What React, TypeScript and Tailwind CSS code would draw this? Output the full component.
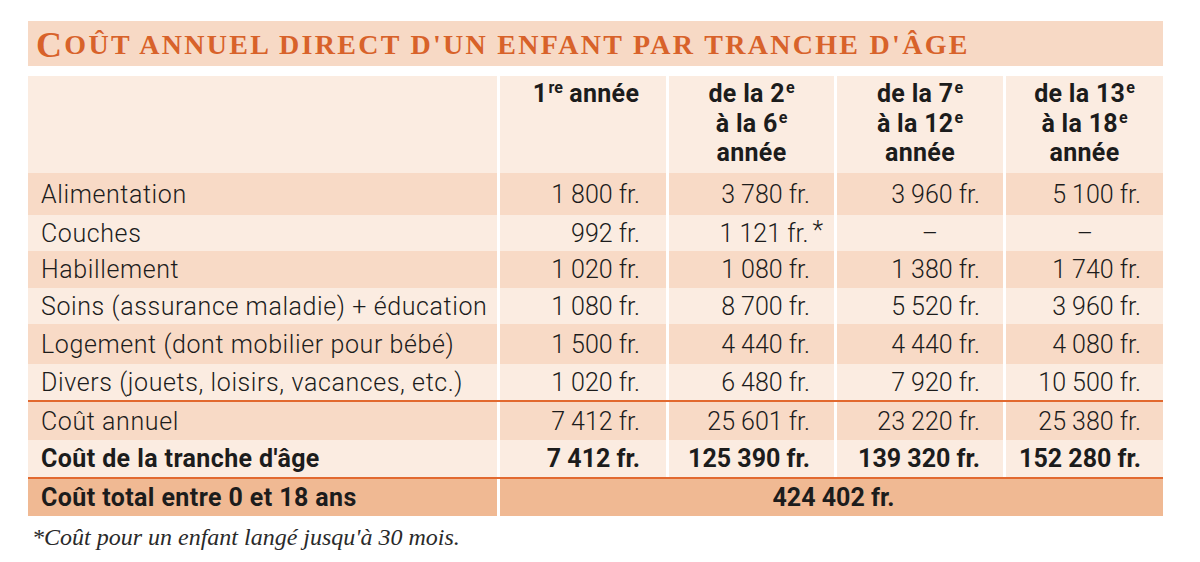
const cols = 'grid grid-cols-[469px_166px_165px_166px_157px] gap-x-[3px]';

type Row = {
  label: string;
  values: React.ReactNode[];
  dark: boolean;
  h: string;
};

const rows: Row[] = [
  { label: 'Alimentation', values: ['1 800 fr.', '3 780 fr.', '3 960 fr.', '5 100 fr.'], dark: true, h: 'h-[42px]' },
  {
    label: 'Couches',
    values: [
      '992 fr.',
      <>1 121 fr.<span className="-mr-[13px] ml-[4px] relative -top-[3px]">*</span></>,
      <span className="pr-[42px]">–</span>,
      <span className="pr-[48px]">–</span>,
    ],
    dark: false,
    h: 'h-[36px]',
  },
  { label: 'Habillement', values: ['1 020 fr.', '1 080 fr.', '1 380 fr.', '1 740 fr.'], dark: true, h: 'h-[37px]' },
  { label: 'Soins (assurance maladie) + éducation', values: ['1 080 fr.', '8 700 fr.', '5 520 fr.', '3 960 fr.'], dark: false, h: 'h-[36px]' },
  { label: 'Logement (dont mobilier pour bébé)', values: ['1 500 fr.', '4 440 fr.', '4 440 fr.', '4 080 fr.'], dark: true, h: 'h-[40px]' },
  { label: 'Divers (jouets, loisirs, vacances, etc.)', values: ['1 020 fr.', '6 480 fr.', '7 920 fr.', '10 500 fr.'], dark: false, h: 'h-[36px]' },
];

// right padding per value column
const pads = ['pr-[26px]', 'pr-[24px]', 'pr-[23px]', 'pr-[22px]'];

function Sup({ children }: { children: React.ReactNode }) {
  return <sup className="text-[16px] relative -top-[9px] ml-[1px] tracking-normal">{children}</sup>;
}

function DataRow({ row, bold = false }: { row: Row; bold?: boolean }) {
  const bg = row.dark ? 'bg-[#f8dac6]' : 'bg-[#fbece1]';
  return (
    <div className={`${cols} ${row.h}`}>
      <div className={`${bg} flex items-center pl-[13px] whitespace-nowrap ${bold ? 'font-bold tracking-[0.4px]' : 'font-light tracking-[0.6px]'}`}>
        {row.label}
      </div>
      {row.values.map((v, i) => (
        <div
          key={i}
          className={`${bg} flex items-center justify-end ${pads[i]} whitespace-nowrap ${bold ? 'font-bold' : 'font-light'}`}
        >
          <span>{v}</span>
        </div>
      ))}
    </div>
  );
}

export default function App() {
  return (
    <div className="w-[1200px] h-[562px] bg-white pt-[21px] pl-[28px] text-[#1c1c1c] font-['Roboto',sans-serif] text-[25px] leading-none overflow-hidden">
      <div className="w-[1135px]">
        {/* Title */}
        <div className="h-[45px] bg-[#f7d9c5] flex items-center pl-[8px] pt-[3px] font-['Liberation_Serif',serif] font-bold text-[#d8622a] whitespace-nowrap tracking-[2.3px]">
          <span className="text-[36px]">C</span>
          <span className="text-[28px]">OÛT ANNUEL DIRECT D'UN ENFANT PAR TRANCHE D'ÂGE</span>
        </div>

        {/* Header */}
        <div className={`${cols} h-[97px] mt-[10px] font-bold leading-[29.5px] tracking-[0.3px]`}>
          <div className="bg-[#fbece1]" />
          <div className="bg-[#fbece1] text-center pt-[3px] pl-[6px]">
            1<Sup>re</Sup> année
          </div>
          <div className="bg-[#fbece1] text-center pt-[3px]">
            de la 2<Sup>e</Sup>
            <br />à la 6<Sup>e</Sup>
            <br />année
          </div>
          <div className="bg-[#fbece1] text-center pt-[3px]">
            de la 7<Sup>e</Sup>
            <br />à la 12<Sup>e</Sup>
            <br />année
          </div>
          <div className="bg-[#fbece1] text-center pt-[3px]">
            de la 13<Sup>e</Sup>
            <br />à la 18<Sup>e</Sup>
            <br />année
          </div>
        </div>

        {rows.map(r => (
          <DataRow key={r.label} row={r} />
        ))}

        <div className="h-[2px] bg-[#e2692f]" />

        <DataRow
          row={{ label: 'Coût annuel', values: ['7 412 fr.', '25 601 fr.', '23 220 fr.', '25 380 fr.'], dark: true, h: 'h-[38px]' }}
        />
        <DataRow
          bold
          row={{ label: "Coût de la tranche d'âge", values: ['7 412 fr.', '125 390 fr.', '139 320 fr.', '152 280 fr.'], dark: false, h: 'h-[37px]' }}
        />

        <div className="h-[2px] bg-[#e2692f]" />

        <div className="grid grid-cols-[469px_1fr] gap-x-[3px] h-[37px] font-bold">
          <div className="bg-[#f0b993] flex items-center pl-[13px] tracking-[0.4px]">Coût total entre 0 et 18 ans</div>
          <div className="bg-[#f0b993] flex items-center justify-center pl-[4px]">424 402 fr.</div>
        </div>

        {/* Footnote */}
        <p className="mt-[9px] pl-[4px] font-['Liberation_Serif',serif] italic text-[24px] text-[#2a2a2a]">
          *Coût pour un enfant langé jusqu'à 30 mois.
        </p>
      </div>
    </div>
  );
}
